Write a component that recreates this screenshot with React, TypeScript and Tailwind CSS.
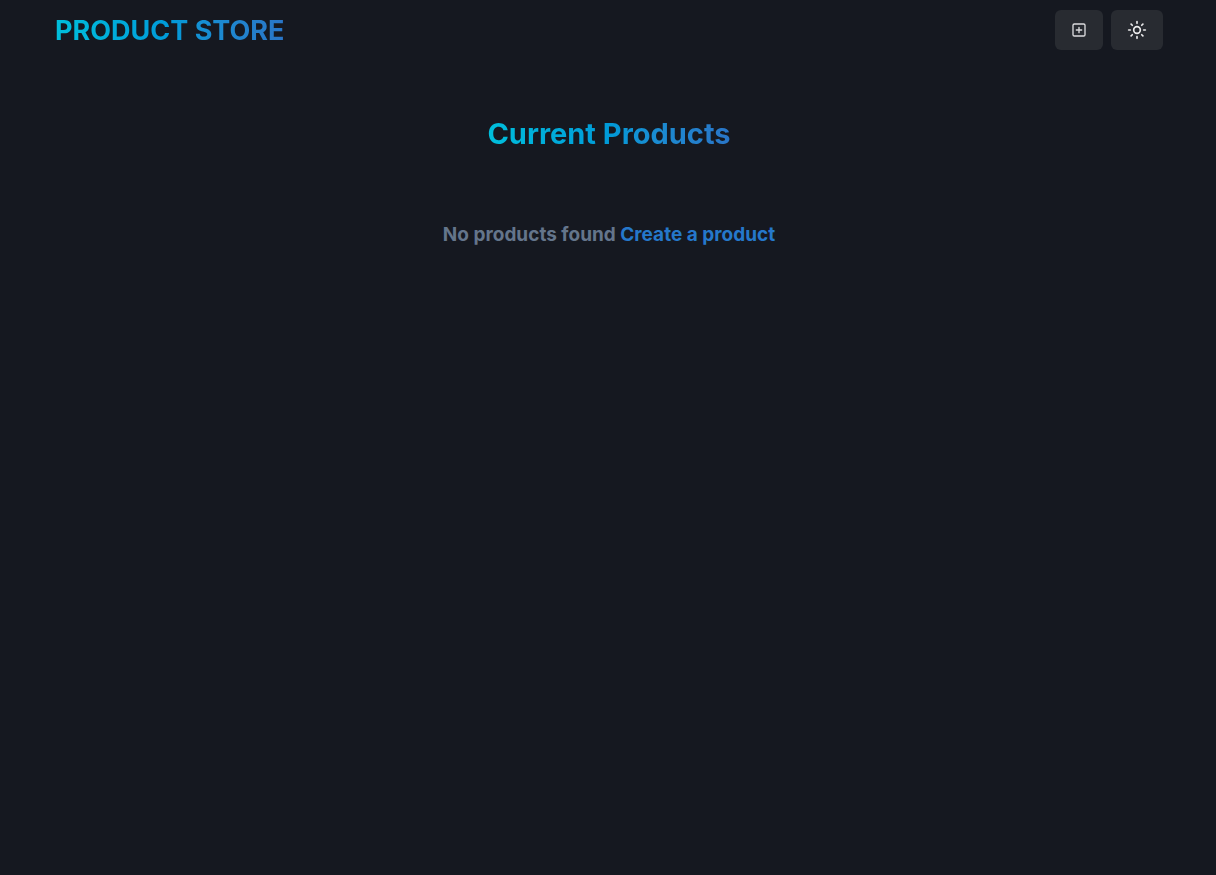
import { LuSun } from "react-icons/lu";
import { IoMoon } from "react-icons/io5";
import { useState } from "react";

function PlusSquareIcon() {
  return (
    <svg viewBox="0 0 24 24" className="size-4" fill="none" stroke="currentColor" strokeWidth="2" strokeLinecap="round" aria-hidden="true">
      <rect x="3" y="3" width="18" height="18" rx="2" ry="2" />
      <path d="M12 8v8M8 12h8" />
    </svg>
  );
}

export default function App() {
  const [dark, setDark] = useState(true);
  return (
    <div className={`min-h-screen pl-0.5 font-['Inter',sans-serif] ${dark ? "bg-[#151820]" : "bg-gray-100"}`}>
      <header className="mx-auto flex h-[60px] max-w-[1140px] items-center justify-between px-4">
        <a href="#" className="bg-linear-to-r from-[#00bfdc] via-[#009ad8] to-[#2975c7] bg-clip-text pt-0.5 text-[27px] leading-9 font-bold text-transparent uppercase">
          Product Store
        </a>
        <div className="flex items-center gap-2">
          <button aria-label="Create product" className="flex h-10 w-12 items-center justify-center rounded-md bg-[#282b31] text-[#dcdcde]">
            <PlusSquareIcon />
          </button>
          <button aria-label="Toggle color mode" onClick={() => setDark(!dark)} className="flex h-10 w-[52px] items-center justify-center rounded-md bg-[#282b31] text-[#ebebec]">
            {dark ? <LuSun size={20} /> : <IoMoon size={20} />}
          </button>
        </div>
      </header>
      <main className="mx-auto flex max-w-[1140px] flex-col items-center px-4 pt-14">
        <h1 className="bg-linear-to-r from-[#00bfdc] via-[#009ad8] to-[#2975c7] bg-clip-text text-[29px] leading-9 font-bold text-transparent">
          Current Products
        </h1>
        <p className="mt-[67px] text-center text-[19px] leading-8 font-bold text-[#64758b]">
          No products found{" "}
          <a href="#" className="text-[#2578cb] hover:underline">Create a product</a>
        </p>
      </main>
    </div>
  );
}
